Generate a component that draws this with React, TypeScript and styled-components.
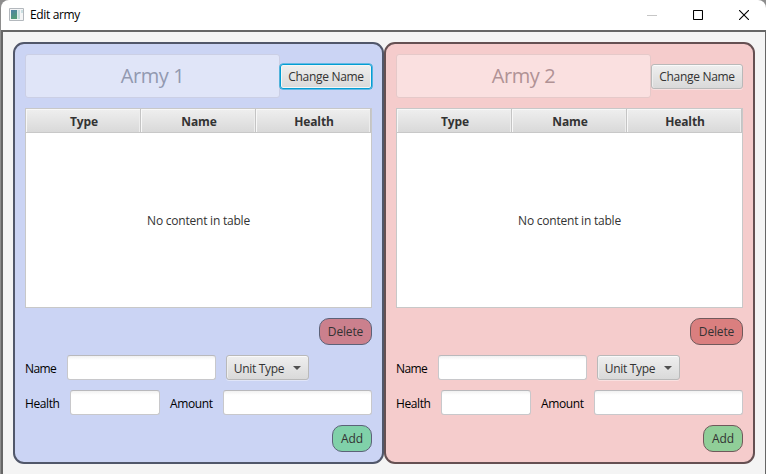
import React from "react";
import styled, { createGlobalStyle } from "styled-components";

type Tone = "blue" | "red";

const tones = {
  blue: {
    fill: "#cbd4f4", line: "#51576a", title: "#e0e5f8", titleLine: "#cbcfe5",
    titleText: "#9299b0", remove: "#cb808d", add: "#80d1a9", round: "#5c6278",
  },
  red: {
    fill: "#f5cccc", line: "#655052", title: "#fae0e0", titleLine: "#e5c9c9",
    titleText: "#b09295", remove: "#da7f7f", add: "#90ce98", round: "#70595b",
  },
};

const GlobalStyle = createGlobalStyle`
  * { box-sizing: border-box; }
  body { margin: 0; overflow: hidden; background: #8d8d8d; }
  button, input { font: inherit; margin: 0; outline: none; }
`;

const Window = styled.div`
  width: 765px;
  height: 474px;
  margin-left: 1px;
  display: flex;
  flex-direction: column;
  background: #fff;
  border-radius: 8px 8px 0 0;
  font-family: "Open Sans", "Noto Sans", sans-serif;
  font-size: 12px;
  color: #000;
`;

const TitleBar = styled.header`
  height: 30px;
  flex: none;
  display: flex;
  align-items: center;
  padding-left: 8px;
`;

const Caption = styled.span`
  margin-left: 6px;
  flex: 1;
  line-height: 30px;
  letter-spacing: -0.35px;
`;

const Controls = styled.div`
  width: 137px;
  height: 28px;
  display: grid;
  grid-template-columns: 46px 45px 47px;
  align-items: center;
  justify-items: center;
  svg { display: block; }
`;

const Content = styled.main`
  flex: 1;
  display: flex;
  align-items: flex-start;
  padding: 10px 0 0 10px;
  background: #f4f4f4;
  border: solid #666;
  border-width: 2px 1px 0 2px;
`;

const Panel = styled.section<{ $tone: Tone }>`
  width: 371px;
  height: 422px;
  padding: 10px;
  display: flex;
  flex-direction: column;
  gap: 10px;
  border: 2px solid ${(p) => tones[p.$tone].line};
  border-radius: 11px;
  background: ${(p) => tones[p.$tone].fill};
`;

const Row = styled.div<{ $end?: boolean; $gap?: number }>`
  display: flex;
  align-items: center;
  gap: ${(p) => p.$gap ?? 0}px;
  justify-content: ${(p) => (p.$end ? "flex-end" : "flex-start")};
`;

const ArmyTitle = styled.div<{ $tone: Tone }>`
  width: 255px;
  height: 44px;
  line-height: 42px;
  text-align: center;
  font-size: 20px;
  letter-spacing: -0.45px;
  border: 1px solid ${(p) => tones[p.$tone].titleLine};
  border-radius: 3px;
  background: ${(p) => tones[p.$tone].title};
  color: ${(p) => tones[p.$tone].titleText};
`;

const Button = styled.button<{ $focused?: boolean; $width: number }>`
  width: ${(p) => p.$width}px;
  height: 25px;
  padding: 1px 0 0;
  display: flex;
  align-items: center;
  justify-content: center;
  white-space: nowrap;
  letter-spacing: -0.3px;
  color: #333;
  border: 1px solid ${(p) => (p.$focused ? "#039ed3" : "#b9b9b9")};
  border-radius: 3px;
  background: linear-gradient(#efefef, #d9d9d9);
  box-shadow: ${(p) =>
    p.$focused
      ? "0 0 0 0.6px #039ed3, inset 0 0 0 1px #f5f5f5"
      : "inset 0 1px 0 #fafafa, inset 1px 0 0 #eeeeee, 0 1px 0 rgba(255,255,255,.4)"};
`;

const RoundButton = styled.button<{ $tone: Tone; $kind: "add" | "remove" }>`
  width: ${(p) => (p.$kind === "add" ? 40 : 53)}px;
  height: 27px;
  padding: 0;
  letter-spacing: -0.15px;
  color: #333;
  border: 1px solid ${(p) => tones[p.$tone].round};
  border-radius: 10px;
  background: ${(p) => tones[p.$tone][p.$kind]};
`;

const Table = styled.div`
  height: 200px;
  display: flex;
  flex-direction: column;
  border: 1px solid #c8c8c8;
  background: #fff;
`;

const Header = styled.div`
  height: 24px;
  display: grid;
  grid-template-columns: 115px 115px 115px;
  grid-template-rows: 24px;
`;

const HeaderCell = styled.div`
  padding-left: 2px;
  border-right: 1px solid #c4c4c4;
  border-bottom: 1px solid #c8c8c8;
  background: linear-gradient(#efefef, #d9d9d9);
  box-shadow: inset 1px 1px 0 #f8f8f8, inset -1px 0 0 #ededed;
  line-height: 25px;
  text-align: center;
  font-weight: 700;
  color: #333;
  letter-spacing: -0.15px;
`;

const Placeholder = styled.div`
  flex: 1;
  line-height: 175px;
  text-align: center;
  letter-spacing: -0.22px;
  color: #333;
`;

const Label = styled.label<{ $width: number; $spacing: number }>`
  width: ${(p) => p.$width}px;
  flex: none;
  line-height: 25px;
  padding-top: 1px;
  height: 25px;
  white-space: nowrap;
  letter-spacing: ${(p) => p.$spacing}px;
`;

const Field = styled.input<{ $width: number }>`
  width: ${(p) => p.$width}px;
  height: 25px;
  padding: 0 7px;
  border: 1px solid #c8c8cb;
  border-top-color: #b9b9bc;
  border-radius: 3px;
  background: linear-gradient(#f1f1f1, #fff 4px);
`;

const Arrow = styled.svg`
  margin-left: 9px;
`;

const IconSlot = styled.span`
  height: 15px;
  line-height: 0;
`;

function AppIcon() {
  return (
    <IconSlot>
      <svg width="15" height="13" viewBox="0 0 15 13">
        <defs>
          <linearGradient id="screen" x1="0" y1="0" x2="0.4" y2="1">
            <stop offset="0" stopColor="#4f80a8" />
            <stop offset="1" stopColor="#529b78" />
          </linearGradient>
        </defs>
        <path d="M.5 .5h14v12H.5z" fill="#f4f5f6" stroke="#b3b8bd" />
        <path d="M2 2h6v9H2z" fill="url(#screen)" />
        <path d="M8.5 2h2.500v9H8.500z" fill="#c6dcde" />
        <path d="M12 2h2v3h-2z" fill="#cbdfe2" />
      </svg>
    </IconSlot>
  );
}

function ArmyPanel({ tone, title, focused }: { tone: Tone; title: string; focused?: boolean }) {
  return (
    <Panel $tone={tone}>
      <Row>
        <ArmyTitle $tone={tone}>{title}</ArmyTitle>
        <Button $width={92} $focused={focused}>Change Name</Button>
      </Row>
      <Table>
        <Header>
          {["Type", "Name", "Health"].map((name) => (
            <HeaderCell key={name}>{name}</HeaderCell>
          ))}
        </Header>
        <Placeholder>No content in table</Placeholder>
      </Table>
      <Row $end>
        <RoundButton $tone={tone} $kind="remove">Delete</RoundButton>
      </Row>
      <Row $gap={10}>
        <Label $width={32} $spacing={-0.6}>Name</Label>
        <Field $width={149} aria-label="Name" />
        <Button $width={83}>
          Unit Type
          <Arrow width="8" height="4" viewBox="0 0 8 4">
            <path d="M0 0h8L4 4z" fill="#505050" />
          </Arrow>
        </Button>
      </Row>
      <Row $gap={10}>
        <Label $width={35} $spacing={-0.4}>Health</Label>
        <Field $width={90} aria-label="Health" />
        <Label $width={43} $spacing={-0.4}>Amount</Label>
        <Field $width={149} aria-label="Amount" />
      </Row>
      <Row $end>
        <RoundButton $tone={tone} $kind="add">Add</RoundButton>
      </Row>
    </Panel>
  );
}

export default function App() {
  return (
    <>
      <GlobalStyle />
      <Window>
        <TitleBar>
          <AppIcon />
          <Caption>Edit army</Caption>
          <Controls>
            <svg width="10" height="10" viewBox="0 0 10 10">
              <path d="M0 5.5h10" stroke="#c6c6c6" />
            </svg>
            <svg width="10" height="10" viewBox="0 0 10 10">
              <rect x=".5" y=".5" width="9" height="9" rx=".6" fill="none" stroke="#000" strokeWidth="1.1" />
            </svg>
            <svg width="10" height="10" viewBox="0 0 10 10">
              <path d="M0 0l10 10M10 0L0 10" stroke="#000" strokeWidth="1.1" />
            </svg>
          </Controls>
        </TitleBar>
        <Content>
          <ArmyPanel tone="blue" title="Army 1" focused />
          <ArmyPanel tone="red" title="Army 2" />
        </Content>
      </Window>
    </>
  );
}
